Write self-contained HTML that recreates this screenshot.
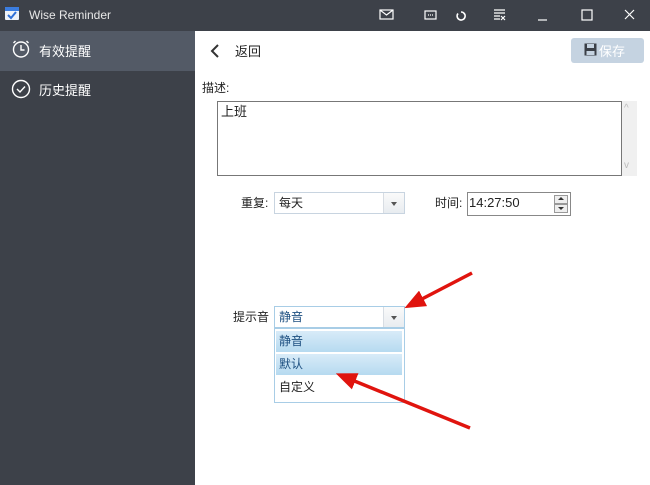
<!DOCTYPE html>
<html><head><meta charset="utf-8"><style>
*{margin:0;padding:0;box-sizing:border-box}
body{width:650px;height:485px;overflow:hidden;font-family:"Liberation Sans","Noto Sans CJK SC",sans-serif;font-size:12px;color:#222;background:#fff;position:relative}
.abs{position:absolute}
.tb{left:0;top:0;width:650px;height:31px;background:#3d4149}
.sb{left:0;top:31px;width:195px;height:454px;background:#3d4149}
.sel{left:0;top:31px;width:195px;height:40px;background:#535a66}
.side{color:#fff;font-size:13px}
.combo{background:#fff;border:1px solid #c8d4e0}
.combo .btn{position:absolute;right:0;top:0;bottom:0;width:21px;border-left:1px solid #d8dde3;background:linear-gradient(#fafafa,#e8ecf0)}
.combo .btn:after{content:"";position:absolute;left:7px;top:9px;border:3.5px solid transparent;border-top:4px solid #555}
.item{left:276px;width:126px;height:21px;padding-left:3px;line-height:20px}
</style></head><body>
<div class="abs tb"></div>
<div class="abs sb"></div>
<div class="abs sel"></div>
<svg class="abs" style="left:4px;top:5px" width="16" height="16" viewBox="0 0 16 16"><rect x="1" y="2" width="14" height="13" rx="1" fill="#eef2f8"/><rect x="1" y="2" width="14" height="4" fill="#3b7de0"/><path d="M4 10l3 3 5-6" stroke="#2f6fd6" stroke-width="2" fill="none"/></svg>
<div class="abs" style="left:29px;top:8px;color:#e8e8e8;font-size:12px">Wise Reminder</div>
<svg class="abs" style="left:360px;top:0" width="290" height="31" viewBox="0 0 290 31" fill="none" stroke="#fff" stroke-width="1.2">
<rect x="20" y="10" width="13" height="9"/><path d="M20 10l6.5 5 6.5-5"/>
<rect x="65" y="11" width="11" height="8"/><path d="M68 15h1M70 15h1M72 15h1"/>
<path d="M101 12a4 4 0 1 1-3 1.5" stroke-width="1.6"/>
<path d="M134 10h11M134 13h11M134 16h6M134 19h6M141 16l4 4M145 16l-4 4"/>
<path d="M178 20h9"/>
<rect x="222" y="10" width="10" height="10"/>
<path d="M265 10l9 9M274 10l-9 9"/>
</svg>
<svg class="abs" style="left:11px;top:39px" width="20" height="20" viewBox="0 0 20 20" fill="none" stroke="#fff" stroke-width="1.4"><circle cx="10" cy="10.5" r="7.5"/><path d="M10 6v5h3.5M2.5 4l2-2M17.5 4l-2-2"/></svg>
<div class="abs side" style="left:39px;top:41px">有效提醒</div>
<svg class="abs" style="left:11px;top:79px" width="20" height="20" viewBox="0 0 20 20" fill="none" stroke="#fff" stroke-width="1.4"><circle cx="10" cy="10" r="8.5"/><path d="M6 10l3 3 5-5.5"/></svg>
<div class="abs side" style="left:39px;top:80px">历史提醒</div>

<svg class="abs" style="left:209px;top:43px" width="12" height="16"><path d="M9 2L3 8l6 6" stroke="#333" stroke-width="2" fill="none"/></svg>
<div class="abs" style="left:235px;top:41px;font-size:13px">返回</div>
<div class="abs" style="left:571px;top:38px;width:73px;height:25px;background:#c5d3e1;border-radius:3px"></div>
<svg class="abs" style="left:584px;top:43px" width="13" height="13"><rect x="0.5" y="0.5" width="12" height="12" fill="#3a3f47"/><rect x="3" y="1" width="7" height="4" fill="#c5d3e1"/><rect x="2.5" y="8" width="8" height="4" fill="#c5d3e1"/></svg>
<div class="abs" style="left:599px;top:41px;font-size:13px;color:#fff">保存</div>

<div class="abs" style="left:202px;top:79px">描述:</div>
<div class="abs" style="left:217px;top:101px;width:405px;height:75px;border:1px solid #777"></div>
<div class="abs" style="left:622px;top:101px;width:15px;height:75px;background:#f0f0f0"></div>
<div class="abs" style="left:624px;top:103px;color:#bbb;font-size:10px">^</div>
<div class="abs" style="left:624px;top:160px;color:#bbb;font-size:10px">v</div>
<div class="abs" style="left:221px;top:101px;font-size:13px">上班</div>

<div class="abs" style="left:241px;top:194px">重复:</div>
<div class="abs combo" style="left:274px;top:192px;width:131px;height:22px"><div class="btn"></div></div>
<div class="abs" style="left:279px;top:194px">每天</div>
<div class="abs" style="left:435px;top:194px">时间:</div>
<div class="abs" style="left:467px;top:192px;width:104px;height:24px;border:1px solid #888;background:#fff"></div>
<div class="abs" style="left:469px;top:195px;font-size:13px">14:27:50</div>
<div class="abs" style="left:554px;top:195px;width:14px;height:9px;border:1px solid #999;background:#eee"></div>
<div class="abs" style="left:554px;top:204px;width:14px;height:9px;border:1px solid #999;background:#eee"></div>
<div class="abs" style="left:558px;top:197px;border:3px solid transparent;border-bottom:3px solid #333;border-top:0"></div>
<div class="abs" style="left:558px;top:207px;border:3px solid transparent;border-top:3px solid #333;border-bottom:0"></div>

<div class="abs" style="left:233px;top:308px;font-size:12px">提示音</div>
<div class="abs combo" style="left:274px;top:306px;width:131px;height:22px;border-color:#a8cde6"><div class="btn"></div></div>
<div class="abs" style="left:279px;top:308px;color:#1d4f80">静音</div>
<div class="abs" style="left:274px;top:328px;width:131px;height:75px;border:1px solid #a8cde6;background:#fff"></div>
<div class="abs item" style="top:331px;background:linear-gradient(#d8ebf8,#b6daf0);color:#1d4f80">静音</div>
<div class="abs item" style="top:354px;background:linear-gradient(#d8ebf8,#b6daf0);color:#1d4f80">默认</div>
<div class="abs item" style="top:377px">自定义</div>

<svg class="abs" style="left:0;top:0" width="650" height="485">
<defs><marker id="a" markerWidth="6" markerHeight="5" refX="1" refY="2.5" orient="auto"><path d="M0 0L6 2.5 0 5z" fill="#e0140e"/></marker></defs>
<path d="M472 273L420 300" stroke="#e0140e" stroke-width="3.5" marker-end="url(#a)"/>
<path d="M470 428L352 380" stroke="#e0140e" stroke-width="3.5" marker-end="url(#a)"/>
</svg>
</body></html>
